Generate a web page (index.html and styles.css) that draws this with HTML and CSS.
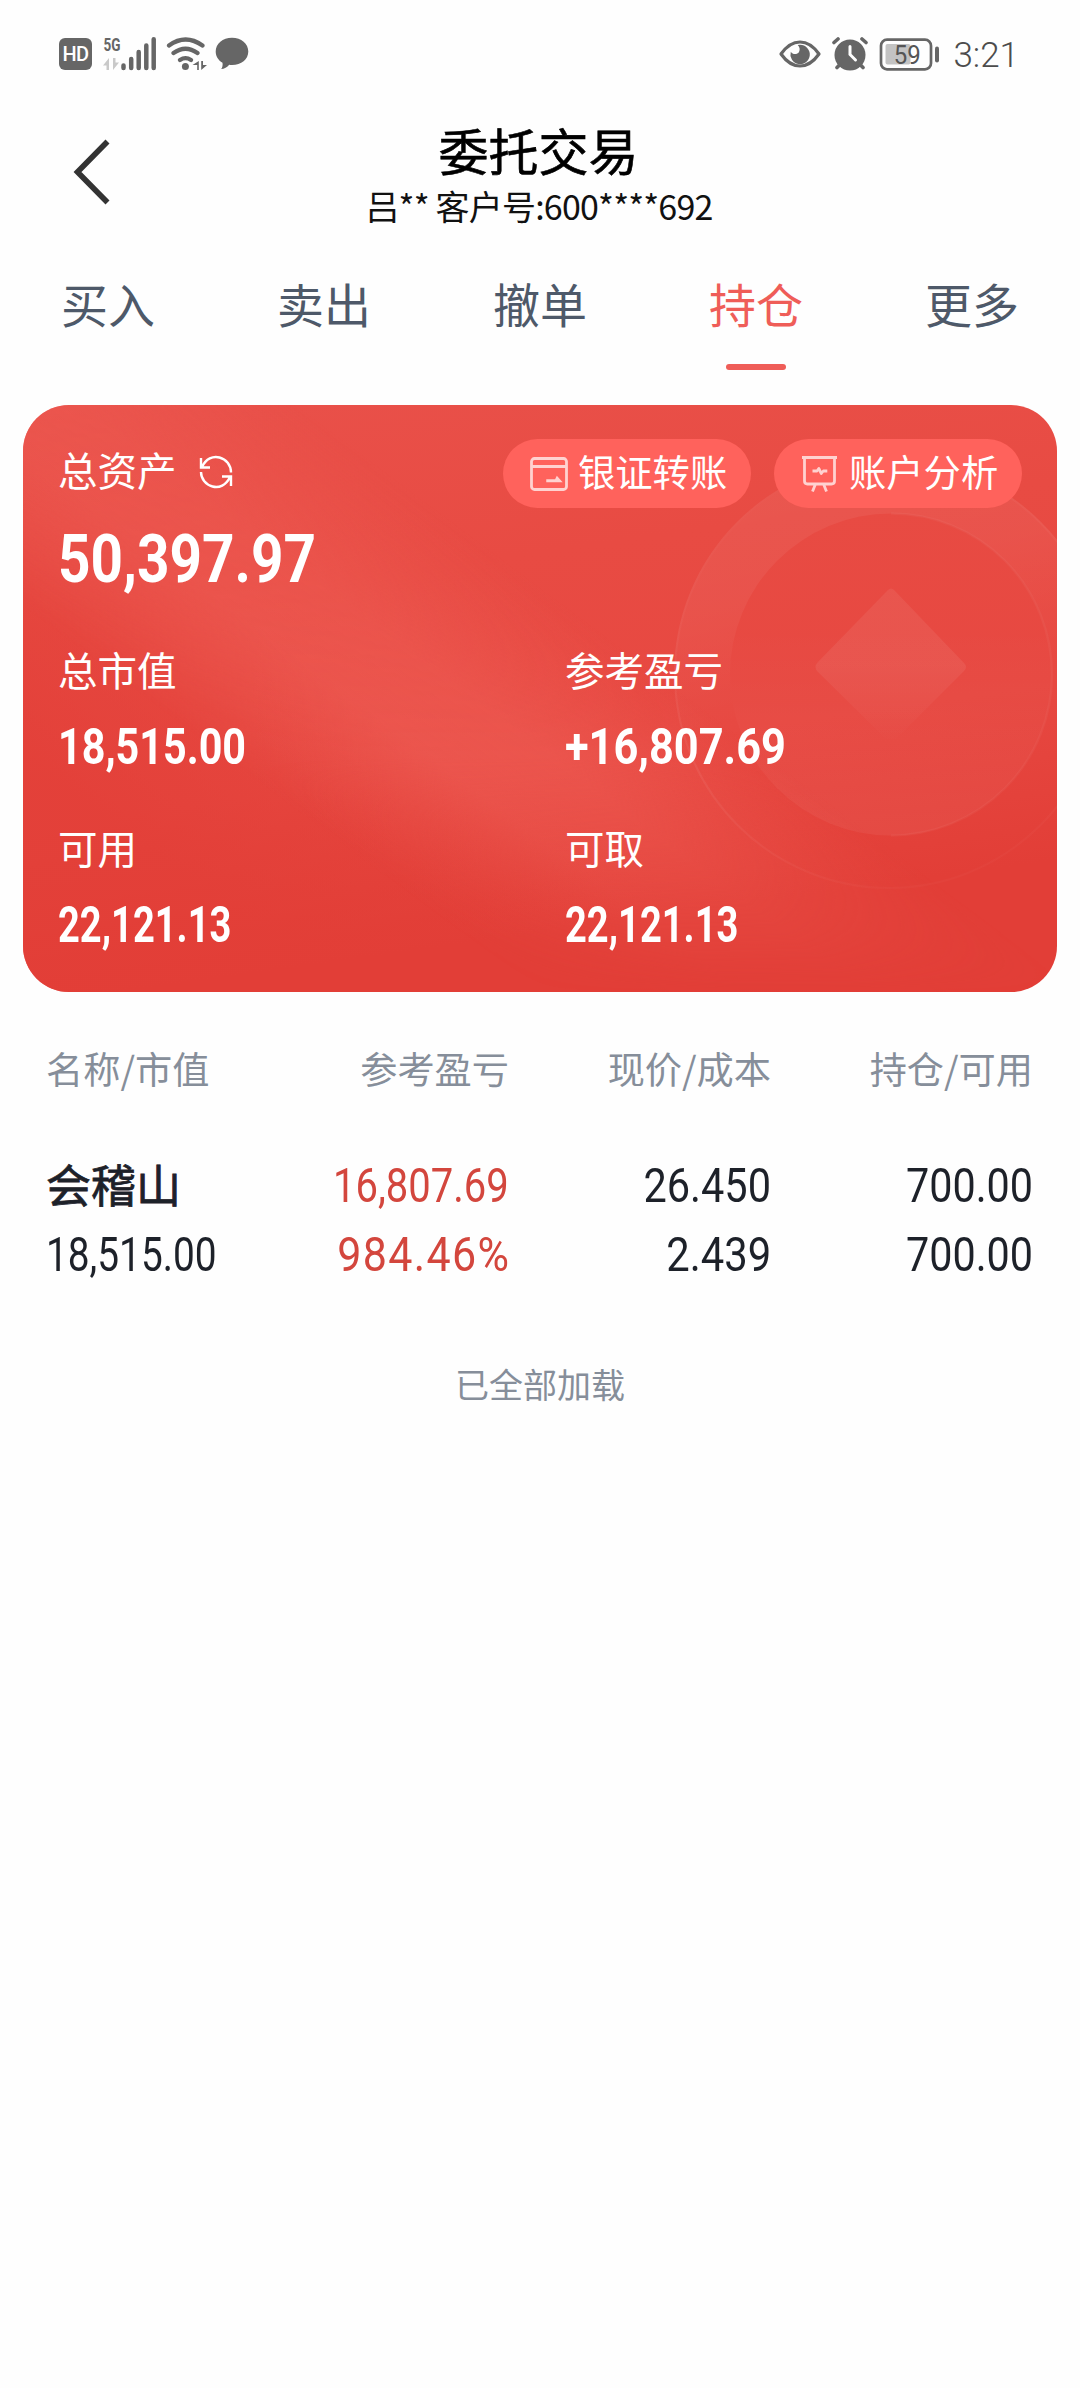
FILE: index.html
```html
<!DOCTYPE html>
<html lang="zh-CN">
<head>
<meta charset="utf-8">
<meta name="viewport" content="width=device-width">
<title>委托交易</title>
<link rel="stylesheet" href="styles.css">
</head>
<body>
<header class="status">
  <div class="status-left">
    <span class="hd">HD</span>
    <svg class="signal" width="54" height="56" viewBox="102 25 54 56">
      <text x="103.500" y="50" class="net" textLength="17" lengthAdjust="spacingAndGlyphs">5G</text>
      <path d="M103 64.500l6-7.500v12h-2.500v-4.500zM119 61.500l-6 7.500V57h2.500v4.500z" fill="#c9c9c9"/>
      <path d="M123.500 64.500v2.500M131.200 58v9M138.700 51v16M146.300 44.500v22.500M153.700 38.300v28.700" stroke="#666" stroke-width="4.500" stroke-linecap="round"/>
    </svg>
    <svg class="wifi" width="44" height="36" viewBox="165 35 44 36" fill="none" stroke="#666" stroke-width="4.200" stroke-linecap="round">
      <path d="M169 44.500q16.500-12 33.500 0M173.500 52q12-8.500 24 0M180 59q5.500-3.700 11 0"/>
      <circle cx="185.400" cy="65.400" r="3.500" fill="#666" stroke="none"/>
      <path d="M198.800 60v9h-1.600v-5h-4.700zM201.200 69v-9h1.800v4h4z" fill="#666" stroke="none"/>
    </svg>
    <svg class="bubble" width="34" height="34" viewBox="215 37 34 34"><path d="M232 37.700c9.300 0 16.300 6 16.300 13.800S241.300 65 232 65c-1 0-2 0-2.800-.2-2 2.700-5 4.200-8 4.200 1.200-1.500 1.700-3.600 1.300-6.200-4.200-2.500-6.800-6.600-6.800-11.300 0-7.800 7-13.800 16.300-13.800z" fill="#666"/></svg>
  </div>
  <div class="status-right">
    <svg width="42" height="30" viewBox="780.500 38.500 42 30" fill="none" stroke="#666" stroke-width="3.200"><path d="M782.500 53.500q8.500-12 19-12t19 12q-8.500 12-19 12t-19-12z" stroke-linejoin="round"/><path d="M801.500 44.300a9.700 9.700 0 1 1-9.200 7c1.800 3 6.500 3 8.200.2 1.400-2.400.5-5-1.300-6.900z" fill="#666" stroke="none"/></svg>
    <svg class="alarm" width="36" height="34" viewBox="833.500 37 36 34"><circle cx="851.500" cy="55" r="15.500" fill="#666"/><path d="M835.500 42.500l4-3.500M867.500 42.500l-4-3.500M838.500 67.500l3-3M864.500 67.500l-3-3" stroke="#666" stroke-width="3.600" stroke-linecap="round"/><path d="M851.500 46.500v8l5.500 5.500" fill="none" stroke="#fff" stroke-width="3" stroke-linecap="round"/></svg>
    <svg class="battery" width="62" height="34" viewBox="881 36 62 34"><rect x="883" y="38.700" width="50" height="29.600" rx="6" fill="none" stroke="#666" stroke-width="2.700"/><rect x="887.500" y="43" width="25" height="20.500" rx="2" fill="#c3c3c3"/><path d="M939 47.500v12" stroke="#666" stroke-width="4" stroke-linecap="round"/><text x="895.800" y="62.800" class="level" textLength="27" lengthAdjust="spacingAndGlyphs">59</text></svg>
    <span class="clock">3:21</span>
  </div>
</header>

<div class="titlebar">
  <svg class="back" width="40" height="68" viewBox="0 0 40 68"><path d="M35.500 3.500L5.500 34l30 30.500" fill="none" stroke="#333" stroke-width="5.600"/></svg>
  <div class="titles">
    <h1>委托交易</h1>
    <p>吕** 客户号:600****692</p>
  </div>
</div>

<nav class="tabs">
  <span>买入</span><span>卖出</span><span>撤单</span><span class="active">持仓</span><span>更多</span>
</nav>

<section class="card">
  <svg class="deco" width="1034" height="587" viewBox="0 0 1034 587">
    <defs>
      <linearGradient id="band" gradientUnits="userSpaceOnUse" x1="206" y1="355" x2="400" y2="95">
        <stop offset="0" stop-color="#ec5850" stop-opacity="0"/><stop offset=".38" stop-color="#ec5850" stop-opacity=".85"/><stop offset=".6" stop-color="#ec5850" stop-opacity=".8"/><stop offset="1" stop-color="#ec5850" stop-opacity="0"/>
      </linearGradient>
      <linearGradient id="shade" gradientUnits="userSpaceOnUse" x1="120" y1="440" x2="290" y2="210">
        <stop offset="0" stop-color="#e23e37" stop-opacity=".75"/><stop offset="1" stop-color="#e23e37" stop-opacity="0"/>
      </linearGradient>
      <linearGradient id="fade" x1="0" y1="0" x2="0" y2="1"><stop offset="0" stop-color="#fff" stop-opacity=".7"/><stop offset=".6" stop-color="#fff"/><stop offset=".78" stop-color="#fff" stop-opacity=".55"/><stop offset="1" stop-color="#fff" stop-opacity="0"/></linearGradient>
      <mask id="bandmask"><rect width="1034" height="587" fill="url(#fade)"/></mask>
      <linearGradient id="ring" x1=".2" y1="0" x2=".45" y2="1"><stop offset="0" stop-color="#fff" stop-opacity=".065"/><stop offset=".3" stop-color="#fff" stop-opacity=".05"/><stop offset=".6" stop-color="#fff" stop-opacity="0"/></linearGradient>
      <linearGradient id="rim" x1=".2" y1="0" x2=".55" y2="1"><stop offset="0" stop-color="#fff" stop-opacity="0"/><stop offset=".6" stop-color="#fff" stop-opacity=".06"/><stop offset="1" stop-color="#fff" stop-opacity=".02"/></linearGradient>
      <linearGradient id="disc" x1="0" y1="0" x2="0" y2="1"><stop offset=".35" stop-color="#fff" stop-opacity="0"/><stop offset="1" stop-color="#fff" stop-opacity=".05"/></linearGradient>
      <linearGradient id="gem" x1="0" y1="0" x2="0" y2="1"><stop offset=".5" stop-color="#fff" stop-opacity=".065"/><stop offset="1" stop-color="#fff" stop-opacity="0"/></linearGradient>
    </defs>
    <rect width="1034" height="587" fill="url(#shade)"/>
    <rect width="1034" height="587" fill="url(#band)" mask="url(#bandmask)"/>
    <path fill-rule="evenodd" fill="url(#ring)" d="M651 269a215 215 0 1 1 430 0a215 215 0 1 1-430 0zM707 269.500a161 161 0 1 0 322 0a161 161 0 1 0-322 0z"/>
    <circle cx="866" cy="269" r="214" fill="none" stroke="url(#rim)" stroke-width="2"/>
    <circle cx="868" cy="269.500" r="161" fill="url(#disc)"/>
    <path d="M868 108.500a161 161 0 0 1 0 322" fill="none" stroke="#fff" stroke-opacity=".04" stroke-width="2.500"/>
    <path d="M865 185q3-3 6 0l70 73q4 4 0 8l-70 70q-3 3-6 0l-70-69q-5-5 0-10z" fill="url(#gem)"/>
  </svg>
  <div class="card-head">
    <div class="total">
      <span class="label">总资产</span>
      <svg class="refresh" width="34" height="34" viewBox="0 0 34 34" fill="none" stroke="#fff" stroke-width="2.400"><path d="M2 3v9.500h9M3 12C7 3.500 14 .8 20.500 2.500S32 10 32 17.500"/><path d="M32 31v-9.500h-9M31 22c-4 8.500-11 11.200-17.500 9.500S2 24 2 17"/></svg>
    </div>
    <div class="actions">
      <span class="pill"><svg width="40" height="36" viewBox="0 0 40 36" fill="none" stroke="#ffd2d0" stroke-width="2.800"><rect x="2.500" y="2.500" width="35" height="31" rx="3"/><path d="M3 10.500h34"/><path d="M18 25.500h14l-4-4.500-1.500 3H18z" fill="#ffd2d0" stroke-width="1.500"/></svg><b>银证转账</b></span>
      <span class="pill"><svg width="40" height="38" viewBox="0 0 40 38" fill="none" stroke="#ffd2d0" stroke-width="2.800"><path d="M2 2.500h35M4.500 3v23q0 3 3 3h24q3 0 3-3V3M15.500 29l-3 7.500M23.500 29l3 7.500"/><path d="M12.500 16h4.500l1.800-2.500 2.500 5 2-2.500h4" stroke-linejoin="round"/></svg><b>账户分析</b></span>
    </div>
  </div>
  <div class="amount"><span class="num n-total">50,397.97</span></div>
  <div class="grid">
    <div class="stat"><span class="label">总市值</span><span class="num n-market">18,515.00</span></div>
    <div class="stat"><span class="label">参考盈亏</span><span class="num n-profit">+16,807.69</span></div>
    <div class="stat"><span class="label">可用</span><span class="num n-cash">22,121.13</span></div>
    <div class="stat"><span class="label">可取</span><span class="num n-cash">22,121.13</span></div>
  </div>
</section>

<section class="holdings">
  <div class="row head"><span>名称/市值</span><span>参考盈亏</span><span>现价/成本</span><span>持仓/可用</span></div>
  <div class="row"><span class="name">会稽山</span><span class="num up s-profit">16,807.69</span><span class="num s-price">26.450</span><span class="num s-qty">700.00</span></div>
  <div class="row"><span class="num s-market">18,515.00</span><span class="num up s-rate">984.46%</span><span class="num s-cost">2.439</span><span class="num s-qty">700.00</span></div>
</section>
<p class="end">已全部加载</p>
</body>
</html>
```
FILE: styles.css
```css
* { box-sizing: border-box; margin: 0; padding: 0; }
body {
  width: 1080px;
  min-height: 2388px;
  background: #fefefe;
  font-family: "Noto Sans CJK SC", sans-serif;
  color: #1d2129;
}
svg { display: block; flex: none; }

.status { display: flex; justify-content: space-between; height: 106px; padding: 36px 61px 0 59px; }
.status-left, .status-right { display: flex; height: 36px; align-items: center; }
.hd {
  width: 33px; height: 32px; border-radius: 6px; background: #666; color: #fff;
  font: 500 20px/32px Roboto, sans-serif; text-align: center; letter-spacing: -.5px;
}
.signal { margin-left: 10px; }
.wifi { margin-left: 9px; }
.bubble { margin-left: 6px; }
.net { font: 700 19px Roboto, sans-serif; fill: #666; }
.alarm { margin-left: 11px; }
.battery { margin-left: 11px; }
.level { font: 400 25.500px Roboto, sans-serif; fill: #555; }
.clock { margin-left: 12px; font: 300 35px/36px Roboto, sans-serif; color: #4c4c4c; transform: translateY(2px); }

.titlebar { display: grid; grid-template-columns: 1fr auto 1fr; height: 149px; padding: 0 72px; }
.back { margin-top: 32px; }
.titles { text-align: center; }
h1 { font-size: 50px; font-weight: 400; -webkit-text-stroke: .6px; line-height: 60px; margin: 13px 0 0 -3px; color: #000; }
.titles p { font-size: 34px; line-height: 44px; margin: 5px 0 0 -2px; color: #111; white-space: nowrap; letter-spacing: -.8px; }

.tabs { display: grid; grid-template-columns: repeat(5, 1fr); height: 150px; padding-top: 16px; }
.tabs span { display: flex; flex-direction: column; align-items: center; height: 99px; font-size: 47px; line-height: 64px; color: #4e5969; }
.tabs .active { color: #ef5d58; }
.active::after { content: ""; width: 60px; height: 6px; margin-top: 29px; border-radius: 3px; background: #ef5d58; }

.num { display: inline-block; font-family: Roboto, sans-serif; white-space: nowrap; transform-origin: left center; }

.card {
  position: relative; overflow: hidden; width: 1034px; height: 587px; margin: 0 23px; padding: 34px 35px 0;
  border-radius: 46px; color: #fff; background: linear-gradient(172deg, #e9514a, #e84b43 30%, #e74841 58%, #e23e37 82%);
}
.deco { position: absolute; inset: 0; }
.card > div { position: relative; }
.card-head { display: flex; justify-content: space-between; height: 69px; }
.total { display: flex; gap: 22px; height: 60px; align-items: center; }
.refresh { margin-top: 5px; }
.label { font-size: 39.500px; line-height: 56px; }
.actions { display: flex; gap: 23px; }
.pill {
  display: flex; align-items: center; gap: 9px; width: 248px; height: 69px; padding-left: 26px;
  border-radius: 35px; background: #ff625c; white-space: nowrap;
}
.pill b { font-size: 37.300px; font-weight: 400; line-height: 60px; margin-top: -5px; }
.amount { height: 107px; padding-top: 11px; }
.n-total { font-size: 67.500px; font-weight: 700; line-height: 80px; transform: scaleX(.84); }
.grid { display: grid; grid-template-columns: 507px 1fr; grid-auto-rows: 178px; margin-top: 26px; }
.stat { display: flex; flex-direction: column; align-items: flex-start; }
.stat .num { font-size: 50.500px; font-weight: 700; line-height: 60px; margin-top: 20px; }
.stat .n-market { transform: scaleX(.818); }
.stat .n-profit { transform: scaleX(.858); }
.stat .n-cash { transform: scaleX(.754); }

.holdings { padding: 41px 47px 0 46px; }
.row { display: grid; grid-template-columns: 240px 223px 262px 262px; height: 69px; align-items: center; }
.row > * { justify-self: end; }
.row > :first-child { justify-self: start; }
.head { font-size: 37.200px; color: #868e9a; height: 70px; margin-bottom: 48px; }
.name { font-size: 45px; font-weight: 400; -webkit-text-stroke: .8px; line-height: 60px; margin-top: -4px; }
.row .num { font-size: 47.500px; line-height: 60px; transform-origin: right center; }
.row .up { color: #d3463d; }
.row .s-market { transform: scaleX(.817); transform-origin: left center; }
.row .s-profit { transform: scaleX(.842); }
.row .s-rate { transform: scaleX(.905); letter-spacing: 1.500px; margin-right: -1.500px; }
.row .s-price { transform: scaleX(.874); }
.row .s-cost { transform: scaleX(.88); }
.row .s-qty { transform: scaleX(.87); }
.end { margin-top: 70px; text-align: center; font-size: 34px; line-height: 50px; color: #868e9a; }
```
